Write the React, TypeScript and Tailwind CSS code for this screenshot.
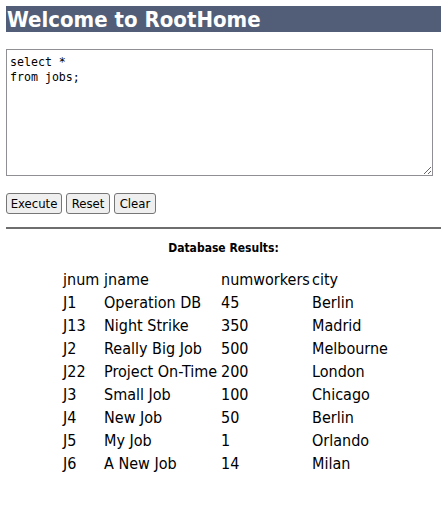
import React from "react";

const rows = [
  ["J1", "Operation DB", "45", "Berlin"],
  ["J13", "Night Strike", "350", "Madrid"],
  ["J2", "Really Big Job", "500", "Melbourne"],
  ["J22", "Project On-Time", "200", "London"],
  ["J3", "Small Job", "100", "Chicago"],
  ["J4", "New Job", "50", "Berlin"],
  ["J5", "My Job", "1", "Orlando"],
  ["J6", "A New Job", "14", "Milan"],
];

const buttons: [string, string][] = [
  ["Execute", "w-[56px]"],
  ["Reset", "w-[44px]"],
  ["Clear", "w-[42px]"],
];

export default function App() {
  const font = { fontFamily: '"DejaVu Sans Condensed", "DejaVu Sans", sans-serif' };
  return (
    <div className="bg-white w-[445px] h-[511px] pl-[6px] pr-[4px] pt-[6px] text-black" style={font}>
      <div className="h-[26px] bg-[#525e77] text-white font-bold text-[22px] leading-[28px] pl-[1px] tracking-[0px]">
        Welcome to RootHome
      </div>
      <textarea
        className="block mt-[17px] w-[427px] h-[127px] border border-[#8f8f94] px-[3px] pt-[5px] text-[11.6px] leading-[15px] resize outline-none"
        style={{ fontFamily: '"DejaVu Sans Mono", monospace' }}
        defaultValue={"select *\nfrom jobs;"}
      />
      <div className="flex gap-[4px] mt-[17px]">
        {buttons.map(([b, w]) => (
          <button
            key={b}
            className={`${w} h-[21px] px-0 bg-[#efefef] border border-[#767676] rounded-[3px] text-[13px] leading-[19px] text-center`}
          >
            {b}
          </button>
        ))}
      </div>
      <div className="mt-[13px] h-[2px] bg-[#6e6e6e]" />
      <div className="mt-[12px] text-center font-bold text-[12px] leading-[14px]">Database Results:</div>
      <div className="mt-[13px] mx-auto w-fit grid grid-cols-[39px_115px_89px_76px] gap-x-[2px] text-[16px] leading-[23px] pl-[4px]">
        <div>jnum</div>
        <div>jname</div>
        <div>numworkers</div>
        <div>city</div>
        {rows.map((r) =>
          r.map((c, i) => (
            <div key={r[0] + i} className="whitespace-nowrap">
              {c}
            </div>
          ))
        )}
      </div>
    </div>
  );
}
